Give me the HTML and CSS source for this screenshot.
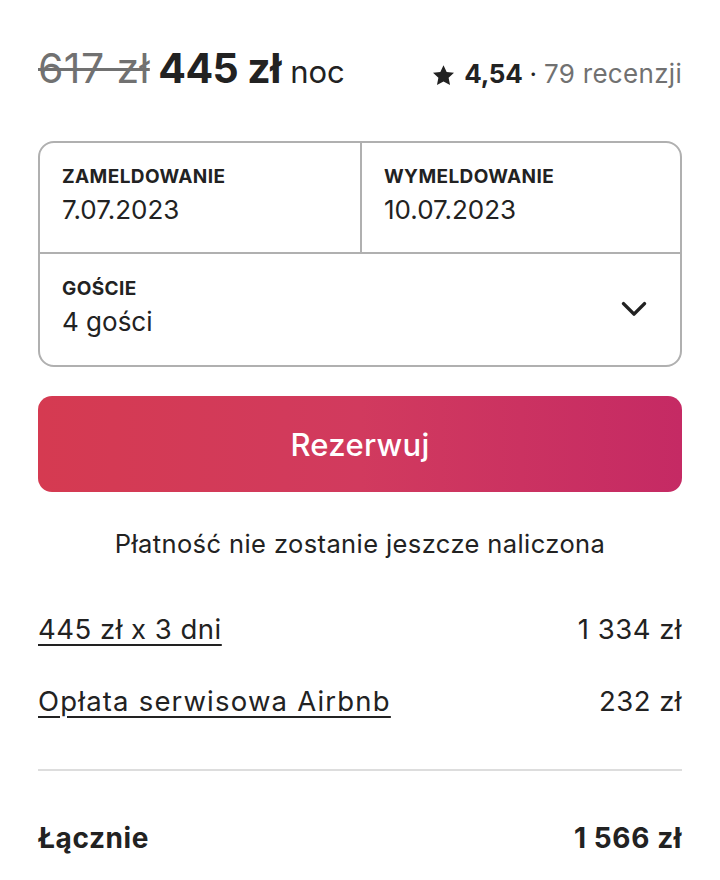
FILE: index.html
```html
<!DOCTYPE html>
<html lang="pl">
<head>
<meta charset="utf-8">
<link rel="stylesheet" href="styles.css">
</head>
<body>
<div class="card">
  <div class="header">
    <div class="price">
      <span class="old">617 zł</span>
      <span class="now">445 zł</span>
      <span class="unit">noc</span>
    </div>
    <div class="rating">
      <svg class="star" viewBox="0 0 32 32" width="23" height="23"><path d="M16 1.6l4.4 9.4 10.2 1.2-7.5 7 2 10.1L16 24.3l-9.1 5 2-10.1-7.5-7 10.2-1.2z" fill="#222"/></svg>
      <span class="score">4,54</span>
      <span class="dot">·</span>
      <span class="reviews">79 recenzji</span>
    </div>
  </div>

  <div class="picker">
    <div class="dates">
      <div class="cell">
        <div class="label">ZAMELDOWANIE</div>
        <div class="value">7.07.2023</div>
      </div>
      <div class="cell cell-right">
        <div class="label">WYMELDOWANIE</div>
        <div class="value">10.07.2023</div>
      </div>
    </div>
    <div class="guests">
      <div class="cell">
        <div class="label">GOŚCIE</div>
        <div class="value">4 gości</div>
      </div>
      <svg class="chevron" viewBox="0 0 32 32" width="28" height="28"><path d="M4 11l12 12 12-12" fill="none" stroke="#222" stroke-width="4" stroke-linecap="round" stroke-linejoin="round"/></svg>
    </div>
  </div>

  <button class="reserve">Rezerwuj</button>

  <p class="note">Płatność nie zostanie jeszcze naliczona</p>

  <div class="lines">
    <div class="line"><span class="link">445 zł x 3 dni</span><span>1 334 zł</span></div>
    <div class="line"><span class="link wide">Opłata serwisowa Airbnb</span><span>232 zł</span></div>
  </div>

  <div class="total"><span>Łącznie</span><span>1 566 zł</span></div>
</div>
</body>
</html>
```

FILE: styles.css
```css
* { box-sizing: border-box; }
html, body { margin: 0; padding: 0; background: #fff; }
body {
  font-family: Inter, "Noto Sans", "Liberation Sans", sans-serif;
  color: #222;
}
.card {
  width: 720px;
  padding: 37px 38px 0 38px;
}
.header {
  display: flex;
  justify-content: space-between;
  align-items: baseline;
  height: 62px;
  line-height: 62px;
}
.price { white-space: nowrap; }
.old {
  font-size: 41px;
  color: #717171;
  text-decoration: line-through;
  text-decoration-thickness: 3px;
  letter-spacing: 0.4px;
}
.now {
  font-size: 41px;
  font-weight: 700;
  letter-spacing: -0.6px;
  margin-left: 4px;
}
.unit {
  font-size: 31px;
  margin-left: 5px;
}
.rating {
  display: flex;
  align-items: baseline;
  font-size: 26px;
  white-space: nowrap;
}
.star { align-self: center; margin-right: 9px; position: relative; top: 1px; }
.score { font-weight: 700; letter-spacing: -0.3px; }
.dot { margin: 0 7px; color: #222; }
.reviews { color: #717171; letter-spacing: 0.3px; }

.picker {
  margin-top: 42px;
  border: 2px solid #b0b0b0;
  border-radius: 16px;
}
.dates {
  display: grid;
  grid-template-columns: 1fr 1fr;
  border-bottom: 2px solid #b0b0b0;
  height: 111px;
}
.cell { padding: 22px 22px 0 22px; }
.cell-right { border-left: 2px solid #b0b0b0; }
.label {
  font-size: 19px;
  font-weight: 700;
  line-height: 24px;
  letter-spacing: 0.4px;
}
.value {
  font-size: 26px;
  line-height: 36px;
  margin-top: 3px;
}
.guests {
  display: flex;
  justify-content: space-between;
  align-items: center;
  height: 111px;
  padding-right: 32px;
}
.guests .cell { padding-top: 0; margin-top: -3px; }
.chevron { margin-top: -4px; }

.reserve {
  display: block;
  width: 100%;
  height: 96px;
  margin-top: 29px;
  border: 0;
  border-radius: 14px;
  background: linear-gradient(to right, #d53a51 0%, #d13a5e 50%, #c52a64 100%);
  color: #fff;
  font-family: inherit;
  font-size: 31px;
  font-weight: 500;
  letter-spacing: 0.3px;
}
.note {
  margin: 0;
  margin-top: 32px;
  text-align: center;
  font-size: 25.5px;
  line-height: 40px;
  letter-spacing: 0.4px;
}
.lines {
  margin-top: 45px;
  padding-bottom: 48px;
  border-bottom: 2px solid #dddddd;
  display: flex;
  flex-direction: column;
  gap: 32px;
}
.line {
  display: flex;
  justify-content: space-between;
  font-size: 27.5px;
  line-height: 40px;
  letter-spacing: 0.5px;
}
.link {
  text-decoration: underline;
  text-decoration-thickness: 2px;
  text-underline-offset: 5px;
}
.wide { letter-spacing: 1.2px; }
.total {
  display: flex;
  justify-content: space-between;
  margin-top: 47px;
  font-size: 28px;
  font-weight: 700;
  line-height: 40px;
  letter-spacing: 0.6px;
}
```
